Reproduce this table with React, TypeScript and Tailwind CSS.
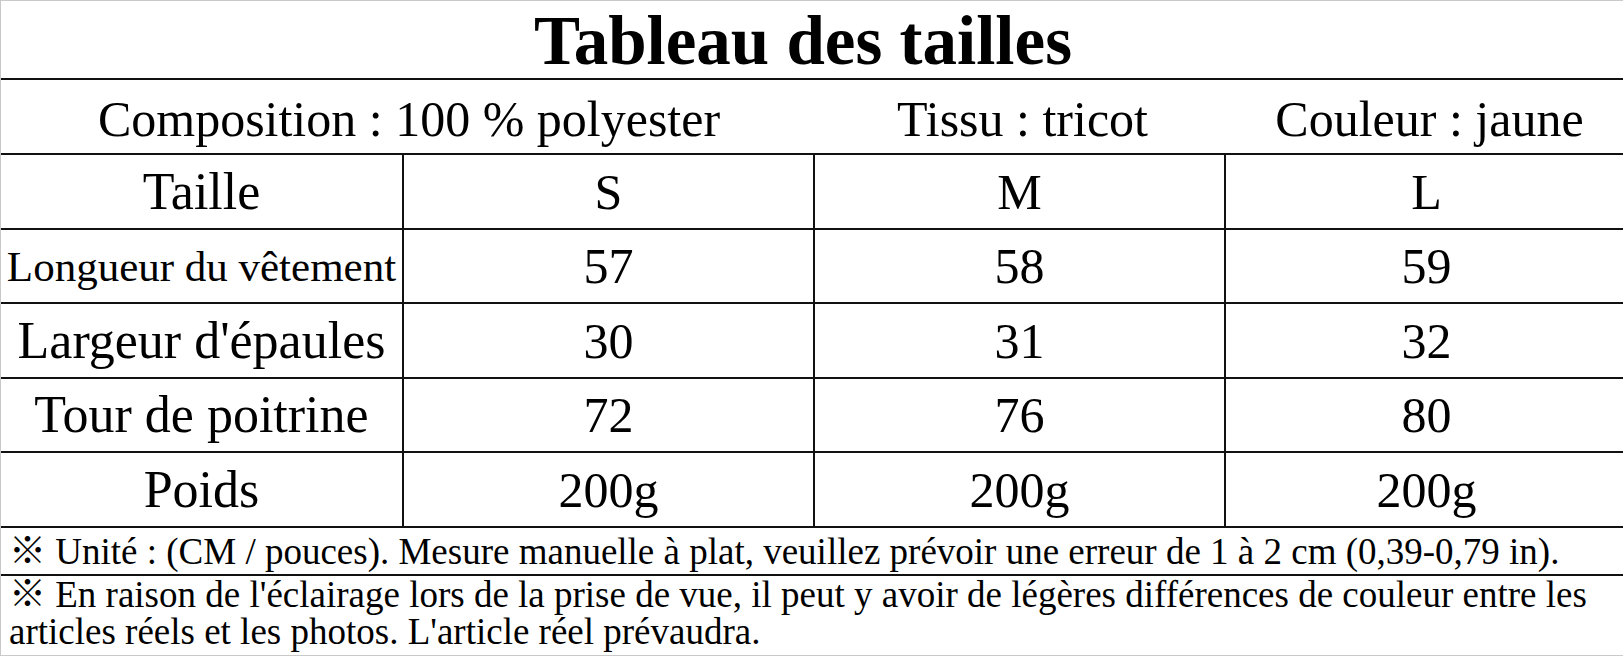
import React from "react"

const rows = [
  { label: "Longueur du vêtement", small: true, values: ["57", "58", "59"] },
  { label: "Largeur d'épaules", values: ["30", "31", "32"] },
  { label: "Tour de poitrine", values: ["72", "76", "80"] },
  { label: "Poids", values: ["200g", "200g", "200g"] },
]

const serif = { fontFamily: '"Liberation Serif", "Noto Sans CJK JP", serif' }

function Row({ label, values, small, h }: { label: string; values: string[]; small?: boolean; h: string }) {
  return (
    <div className={`flex border-b-2 border-[#111] ${h}`}>
      <div
        className={`flex w-[403px] shrink-0 items-center justify-center border-r-2 border-[#111] ${
          small ? "text-[43px]" : "text-[52px]"
        }`}
      >
        {label}
      </div>
      <div className="flex w-[411px] shrink-0 items-center justify-center border-r-2 border-[#111] text-[50px]">
        {values[0]}
      </div>
      <div className="flex w-[411px] shrink-0 items-center justify-center border-r-2 border-[#111] text-[50px]">
        {values[1]}
      </div>
      <div className="flex flex-1 items-center justify-center pl-[4px] text-[50px]">{values[2]}</div>
    </div>
  )
}

export default function App() {
  return (
    <div className="h-[656px] w-[1623px] overflow-hidden bg-white text-black" style={serif}>
      <div className="flex h-full flex-col border-t border-l border-b border-[#c9c9c9] leading-none">
        {/* Title */}
        <div className="flex h-[79px] items-center justify-center border-b-2 border-[#111] pr-[18px] pt-[3px] text-[69px] font-bold">
          Tableau des tailles
        </div>

        {/* Composition / tissu / couleur */}
        <div className="flex h-[75px] border-b-2 border-[#111] pt-[4px] text-[50px]">
          <div className="flex w-[816px] shrink-0 items-center justify-center">Composition : 100 % polyester</div>
          <div className="flex w-[411px] shrink-0 items-center justify-center">Tissu : tricot</div>
          <div className="flex flex-1 items-center justify-center pl-[8px]">Couleur : jaune</div>
        </div>

        <Row label="Taille" values={["S", "M", "L"]} h="h-[75px]" />
        {rows.map((r, i) => (
          <Row key={r.label} label={r.label} values={r.values} small={r.small} h={i % 2 === 0 ? "h-[74px]" : "h-[75px]"} />
        ))}

        {/* Notes */}
        <div className="flex h-[48px] items-center border-b-2 border-[#111] pl-[8px] text-[37px] leading-[37px]">
          ※ Unité : (CM / pouces). Mesure manuelle à plat, veuillez prévoir une erreur de 1 à 2 cm (0,39-0,79 in).
        </div>
        <div className="flex-1 pl-[8px] text-[37px] leading-[37px] whitespace-nowrap">
          ※ En raison de l'éclairage lors de la prise de vue, il peut y avoir de légères différences de couleur entre les
          <br />
          articles réels et les photos. L'article réel prévaudra.
        </div>
      </div>
    </div>
  )
}
